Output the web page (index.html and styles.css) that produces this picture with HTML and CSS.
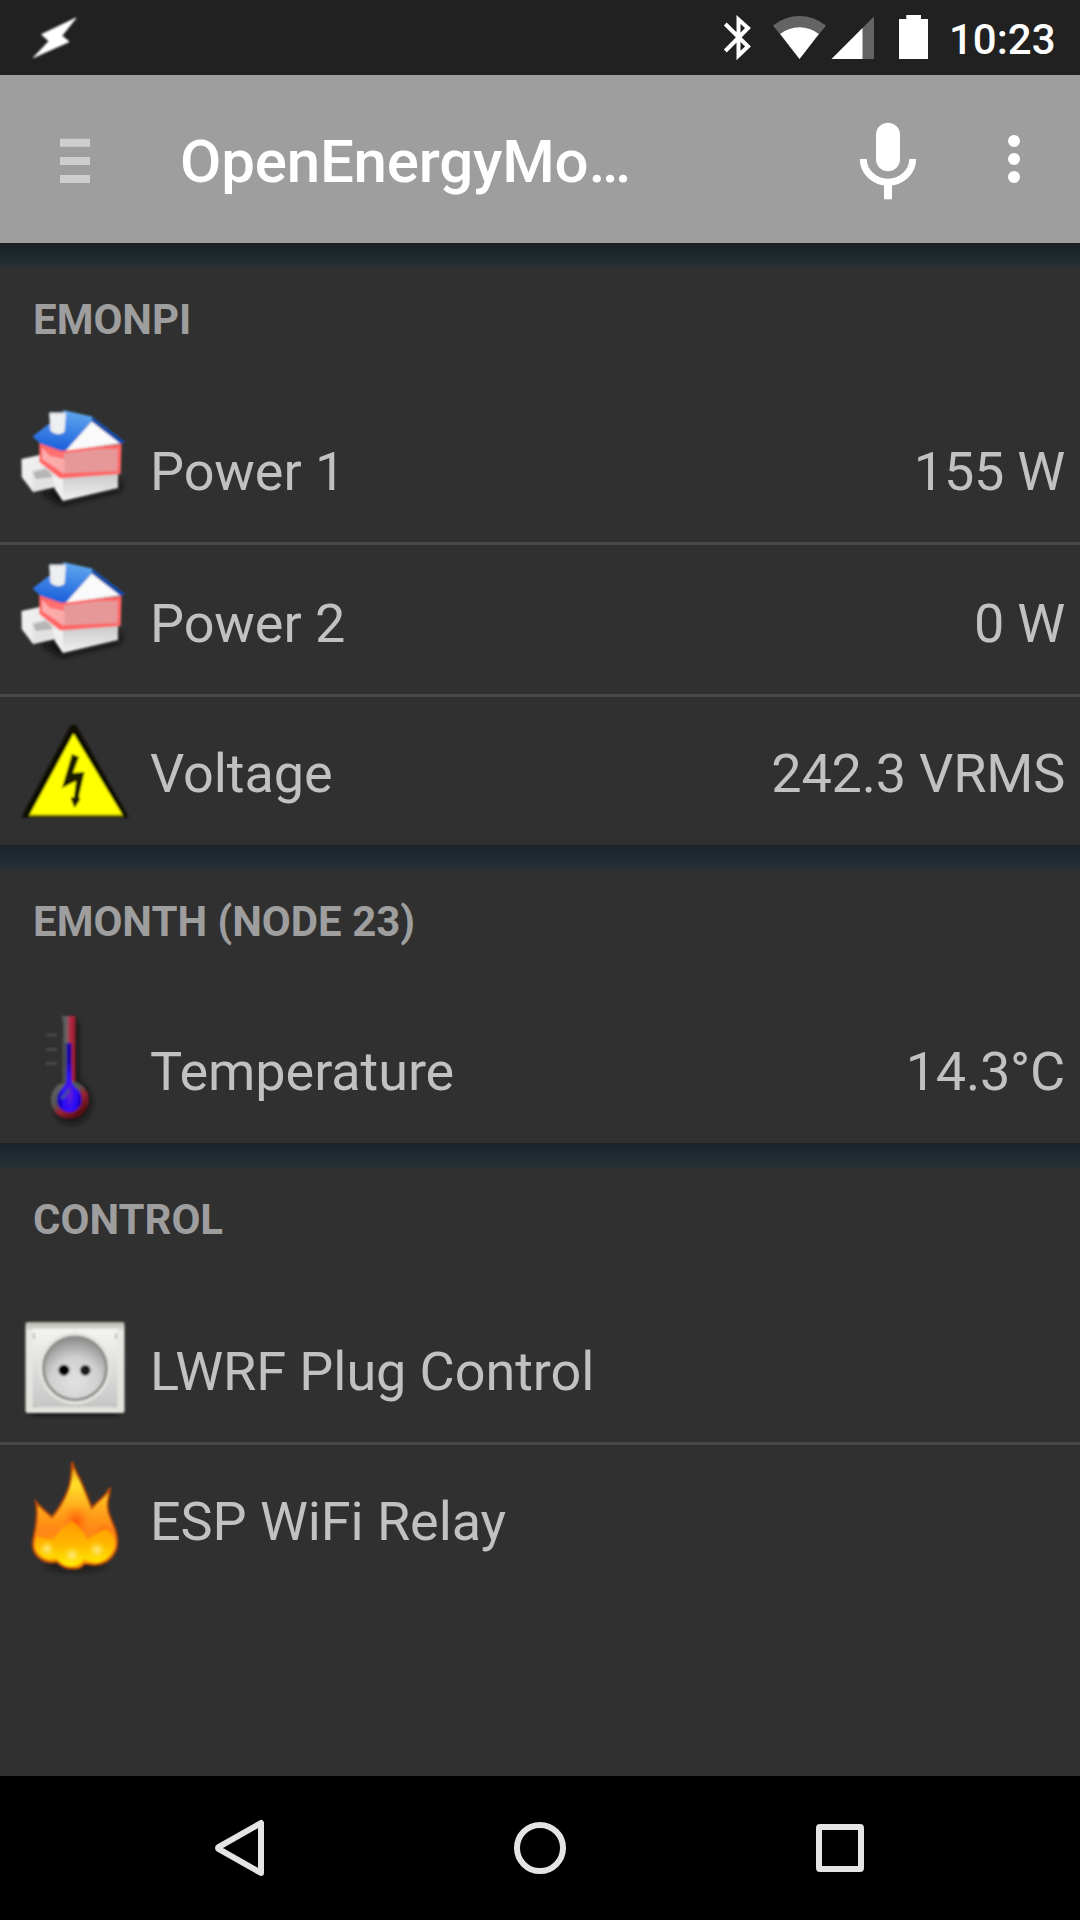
FILE: index.html
```html
<!DOCTYPE html>
<html lang="en">
<head>
<meta charset="utf-8">
<title>OpenEnergyMonitor</title>
<link rel="stylesheet" href="styles.css">
</head>
<body>
<svg class="defs" width="0" height="0" aria-hidden="true">
  <defs>
    <filter id="soft" x="-10%" y="-10%" width="120%" height="120%"><feGaussianBlur stdDeviation="1.2"/></filter>
    <filter id="shade" x="-50%" y="-50%" width="200%" height="200%"><feGaussianBlur stdDeviation="3"/></filter>
    <linearGradient id="roof" x1="0.7" y1="0" x2="0.45" y2="1"><stop offset="0" stop-color="#65aef0"/><stop offset="1" stop-color="#1c60dc"/></linearGradient>
    <linearGradient id="wall" x1="0" y1="0" x2="0" y2="1"><stop offset="0" stop-color="#c9c9c9"/><stop offset="1" stop-color="#f0f0f0"/></linearGradient>
    <symbol id="house" viewBox="0 0 150 148">
      <path d="M40 98 60 112 120 98 122 88 100 90Z" fill="#080808" opacity=".85" filter="url(#shade)"/>
      <g filter="url(#soft)">
        <path d="M21.5 66 40 62 60 84 55 94 33 99 21.7 84Z" fill="#eee"/>
        <path d="M32 77 52 72 55 94 33 99Z" fill="#e2e2e2"/>
        <path d="M33 79 46 76 54 84 36 86Z" fill="#b5b5b5"/>
        <path d="M52 82 118 80 118 95 63 108 55 96Z" fill="url(#wall)"/>
        <path d="M52 82 63 84 63 108 55 96Z" fill="#f0f0f0"/>
        <path d="M39.3 50 63.5 57 121.5 51 120.7 81 60 85.5 39.3 69Z" fill="#ff6464"/>
        <path d="M42 55 64 61 64 81 42 66Z" fill="#fbaaaa"/>
        <path d="M42 55 64 61 64 66 50 63Z" fill="#ff7070"/>
        <path d="M64 60 98 56 118 56 117.5 78 64 80.5Z" fill="#e69898"/>
        <path d="M32.5 43.5 50 30 64 17.3 91.7 23.5 125 49 120 51 91.7 28.5 66.7 57 61.5 58 40 50.5Z" fill="url(#roof)"/>
        <path d="M92 24 125 49 120 51 91.7 28.5Z" fill="#0d47a9"/>
        <path d="M91.7 28.5 120 50.5 66 57.5Z" fill="#fafafa"/>
        <path d="M49 19.7H66L64.500 39Q57 44 50.500 38Z" fill="#eceeef"/>
        <path d="M50 20H65" stroke="#bcc6cf" stroke-width="2"/>
      </g>
    </symbol>
    <radialGradient id="dish" cx=".5" cy=".72" r=".72"><stop offset="0" stop-color="#e2e2e2"/><stop offset=".55" stop-color="#cfcfcf"/><stop offset="1" stop-color="#8a8a8a"/></radialGradient>
    <linearGradient id="plate" x1="0" y1="0" x2="0" y2="1"><stop offset="0" stop-color="#f4f4f2"/><stop offset="1" stop-color="#c6c6c6"/></linearGradient>
    <linearGradient id="frame" x1="0" y1="0" x2="0" y2="1"><stop offset="0" stop-color="#b2b2a8"/><stop offset=".1" stop-color="#e8e8e4"/><stop offset="1" stop-color="#e3e3dc"/></linearGradient>
    <linearGradient id="flame" x1="0" y1="0" x2="0" y2="1"><stop offset="0" stop-color="#e88a10"/><stop offset=".2" stop-color="#ffe228"/><stop offset=".45" stop-color="#ffa51c"/><stop offset=".65" stop-color="#ff8614"/><stop offset="1" stop-color="#ffa800"/></linearGradient>
    <linearGradient id="embers" x1="0" y1="0" x2="0" y2="1"><stop offset="0" stop-color="#ff9a00"/><stop offset=".55" stop-color="#ffb800"/><stop offset="1" stop-color="#fff000"/></linearGradient>
    <radialGradient id="glow"><stop offset="0" stop-color="#ffe98c"/><stop offset="1" stop-color="#ffd900" stop-opacity="0"/></radialGradient>
    <radialGradient id="heat"><stop offset="0" stop-color="#ff5a08"/><stop offset="1" stop-color="#ff7a10" stop-opacity="0"/></radialGradient>
    <linearGradient id="tube" x1="0" y1="0" x2="1" y2="0"><stop offset="0" stop-color="#484848"/><stop offset=".4" stop-color="#666"/><stop offset=".6" stop-color="#b62b48"/><stop offset="1" stop-color="#951b2a"/></linearGradient>
    <linearGradient id="bulb" x1=".1" y1=".1" x2=".7" y2=".9"><stop offset="0" stop-color="#606060"/><stop offset=".42" stop-color="#555"/><stop offset=".65" stop-color="#9a2332"/><stop offset="1" stop-color="#5a0d16"/></linearGradient>
    <radialGradient id="fluid" cx=".52" cy=".75" r=".5"><stop offset="0" stop-color="#6a20c8"/><stop offset=".5" stop-color="#2a08ff"/><stop offset="1" stop-color="#1704a4"/></radialGradient>
  </defs>
</svg>

<div class="screen">
  <header class="status">
    <svg class="status-left" width="90" height="75" viewBox="0 0 90 75"><path d="M76 18 61.8 35.8 69 41.7 33.5 57.5 49 41.2 41.7 34.5Z" fill="#fff" stroke="#fff" filter="url(#soft)"/></svg>
    <div class="status-right">
      <svg width="220" height="75" viewBox="720 0 220 75" fill="#fff">
        <path d="M725.3 24 748 46.5 738.5 55.5V19.5L748 28 725.3 51" fill="none" stroke="#fff" stroke-width="4"/>
        <path d="M799.5 59 773 25.5Q785 16 799.5 16T826 25.5Z" fill="#646464"/>
        <path d="M799.5 59 780.2 34Q789 27.3 799.5 27.3T818.8 34Z"/>
        <path d="M874 16.5V59H831.5Z" fill="#646464"/>
        <path d="M862.5 28V59H831.5Z"/>
        <path d="M906.3 15H921V19H928V59H899V19H906.3Z"/>
      </svg>
      <span class="clock">10:23</span>
    </div>
  </header>

  <div class="appbar">
    <svg class="menu" width="180" height="168" viewBox="0 75 180 168" fill="#cecece"><path d="M60 138.7H90V146.7H60ZM60 157H90V165H60ZM60 175H90V183H60Z"/></svg>
    <h1 class="title">OpenEnergyMo…</h1>
    <svg class="actions" width="240" height="168" viewBox="840 75 240 168" fill="#fff">
      <rect x="876" y="122.7" width="24" height="48.5" rx="12"/>
      <path d="M863.3 159A24.7 23.2 0 0 0 912.7 159" fill="none" stroke="#fff" stroke-width="7"/>
      <path d="M884 183H892V199.3H884Z"/>
      <circle cx="1014" cy="141" r="6"/><circle cx="1014" cy="159" r="6"/><circle cx="1014" cy="177" r="6"/>
    </svg>
  </div>

  <main class="content">
    <section class="group">
      <h2 class="heading">EMONPI</h2>
      <div class="row"><svg class="icon"><use href="#house"/></svg><span class="label">Power 1</span><span class="value">155 W</span></div>
      <div class="row"><svg class="icon"><use href="#house"/></svg><span class="label">Power 2</span><span class="value">0 W</span></div>
      <div class="row">
        <svg class="icon" viewBox="0 0 150 148"><g filter="url(#soft)">
          <path d="M71 28H76L128 119V120.500H22V119Z" fill="#0d0b05"/>
          <path d="M73.500 36.500 122.500 118H29.500Z" fill="#ff0"/>
          <path d="M29 118.500H123" stroke="#8c8a00" stroke-width="2"/>
          <path d="M72 57 79 60 73 76 84.500 75 79 99 80 103 74.500 111 70.500 101 74 100 76 84 62 91Z" fill="#1c1a00"/>
        </g></svg>
        <span class="label">Voltage</span><span class="value">242.3 VRMS</span>
      </div>
    </section>

    <section class="group">
      <h2 class="heading">EMONTH (NODE 23)</h2>
      <div class="row">
        <svg class="icon" viewBox="0 0 150 148">
          <path d="M70 26H78V86Q91 94 91 110 86 128 72 129 58 128 55 114L66 88Z" fill="#0c0c0c" opacity=".75" filter="url(#shade)"/>
          <g filter="url(#soft)">
            <path d="M46 40H57M46 54.500H57M46 68.500H57" stroke="#484848" stroke-width="3"/>
            <path d="M61 21H75.500V88H63V28Z" fill="url(#tube)"/>
            <circle cx="69.700" cy="105" r="19" fill="url(#bulb)"/>
            <path d="M62 48H66V89H62Z" fill="#4a4a4a"/>
            <path d="M66.500 48H71.500V87Q74 92 79 96 83 102 81 109 77 117 69.500 117 61 117 57.500 109 55.500 102 60 96 65 91 66.500 87Z" fill="url(#fluid)"/>
            <path d="M68 93 60 103 63 105 70 96Z" fill="#4444a8"/>
          </g>
        </svg>
        <span class="label">Temperature</span><span class="value">14.3°C</span>
      </div>
    </section>

    <section class="group last">
      <h2 class="heading">CONTROL</h2>
      <div class="row">
        <svg class="icon" viewBox="0 0 150 148">
          <rect x="31" y="112" width="88" height="9" fill="#111" filter="url(#shade)"/>
          <g filter="url(#soft)">
            <rect x="25.500" y="29" width="99" height="91" rx="2" fill="url(#frame)"/>
            <rect x="32.500" y="36" width="85" height="78" fill="url(#plate)"/>
            <path d="M34 40V46M116 40V46M33 112 37 114M117 112 113 114" stroke="#bbb" stroke-width="2"/>
            <circle cx="75" cy="75.300" r="36" fill="#e4e4df"/>
            <circle cx="75" cy="75.300" r="31.500" fill="url(#dish)" stroke="#8c8c89" stroke-width="2.800"/>
            <circle cx="64" cy="77.200" r="5.500" fill="#000"/><circle cx="85.300" cy="77.200" r="5.200" fill="#1c1c1c"/>
          </g>
        </svg>
        <span class="label">LWRF Plug Control</span>
      </div>
      <div class="row">
        <svg class="icon" viewBox="0 0 150 148">
          <ellipse cx="75" cy="120" rx="30" ry="6" fill="#111" opacity=".6" filter="url(#shade)"/>
          <g filter="url(#soft)">
            <path d="M72 17C75 26 79 32 82 39 86 48 88 54 92 63 96 57 106 52 110 43 110 51 106 56 108 64 109 74 117 83 117 94 119 107 109 118 98 119.500 92 121 87 118 84 119 81 124 76 123.500 72 123.500 65 123.500 60 120 57 117 50 118 45 117 41 114 35 110 32 105 33 97 34 86 39 77 36 57 42 64 47 68 52 72 58 65 63 58 68 45 71 37 72 27 72 17Z" fill="url(#flame)" stroke="#b84a08" stroke-width="2.200"/>
            <ellipse cx="76" cy="76" rx="15" ry="16" fill="url(#heat)"/>
            <ellipse cx="105" cy="86" rx="11" ry="9" fill="url(#heat)" opacity=".7"/>
            <path d="M72 76Q82 84 87 95 98 87 106 84 117 91 114 103 110 113 99 117 91 118 84 114 79 121 71 121 61 120 57 113 45 116 38 108 32 101 37 92L53 95Q60 83 72 76Z" fill="url(#embers)"/>
            <circle cx="47" cy="104" r="9" fill="url(#glow)"/><circle cx="72" cy="110" r="10" fill="url(#glow)"/><circle cx="97" cy="105" r="10" fill="url(#glow)"/>
          </g>
        </svg>
        <span class="label">ESP WiFi Relay</span>
      </div>
    </section>
  </main>

  <nav class="navbar">
    <svg class="nav-icon" viewBox="0 0 72 72"><path d="M57 11V61L14.500 36.800Q13.500 36 14.500 35.200Z"/></svg>
    <svg class="nav-icon" viewBox="0 0 72 72"><circle cx="36" cy="36" r="23"/></svg>
    <svg class="nav-icon" viewBox="0 0 72 72"><rect x="15" y="15" width="42" height="42" rx="1"/></svg>
  </nav>
</div>
</body>
</html>
```
FILE: styles.css
```css
* { box-sizing: border-box; }

body {
  margin: 0;
  background: #000;
  font-family: Roboto, "Noto Sans", sans-serif;
}

.defs { position: absolute; }

svg { display: block; flex: none; }

.screen {
  display: flex;
  flex-direction: column;
  width: 1080px;
  height: 1920px;
  overflow: hidden;
}

.status {
  display: flex;
  justify-content: space-between;
  height: 75px;
  flex: none;
  background: #212121;
  color: #fff;
}

.status-right {
  display: flex;
  width: 360px;
}

.clock {
  padding-left: 9px;
  font-size: 42px;
  font-weight: 500;
  line-height: 80px;
}

.appbar {
  display: flex;
  height: 168px;
  flex: none;
  background: #9e9e9e;
  color: #fff;
}

.title {
  flex: 1;
  margin: 0;
  font-size: 60px;
  font-weight: 500;
  letter-spacing: -0.18px;
  line-height: 173px;
  white-space: nowrap;
}

.content {
  flex: 1;
  display: flex;
  flex-direction: column;
  gap: 24px;
  padding-top: 24px;
  background: linear-gradient(#182023 0, #263036 24px, #263036 100%);
}

.group {
  position: relative;
  background: #303030;
}

/* shade that each card casts on the gap below it */
.group::after {
  content: "";
  position: absolute;
  left: 0;
  right: 0;
  top: 100%;
  height: 24px;
  background: linear-gradient(#1c242b, #253036);
}

.group.last { flex: 1; }
.group.last::after { display: none; }

.heading {
  height: 126px;
  margin: 0;
  padding: 28px 0 0 33px;
  color: #9e9e9e;
  font-size: 42px;
  font-weight: 700;
  line-height: 50px;
}

.row {
  display: flex;
  height: 152px;
  padding: 47px 15px 0 0;
  border-bottom: 3px solid #484848;
  color: #c1c1c1;
  font-size: 54px;
  line-height: 64px;
}

.row:last-child {
  height: 148px;
  padding-top: 45px;
  border-bottom: 0;
}

.icon {
  width: 150px;
  height: 148px;
  margin-top: -47px;
}

.row:last-child .icon { margin-top: -45px; }

.label {
  flex: 1;
  letter-spacing: -0.08px;
}

.value { letter-spacing: -0.22px; }

.navbar {
  display: flex;
  justify-content: space-around;
  align-items: center;
  height: 144px;
  flex: none;
  padding: 0 90px;
  background: #000;
}

.nav-icon {
  width: 72px;
  height: 72px;
  fill: none;
  stroke: #e4e4e4;
  stroke-width: 6;
  stroke-linejoin: round;
}
```
